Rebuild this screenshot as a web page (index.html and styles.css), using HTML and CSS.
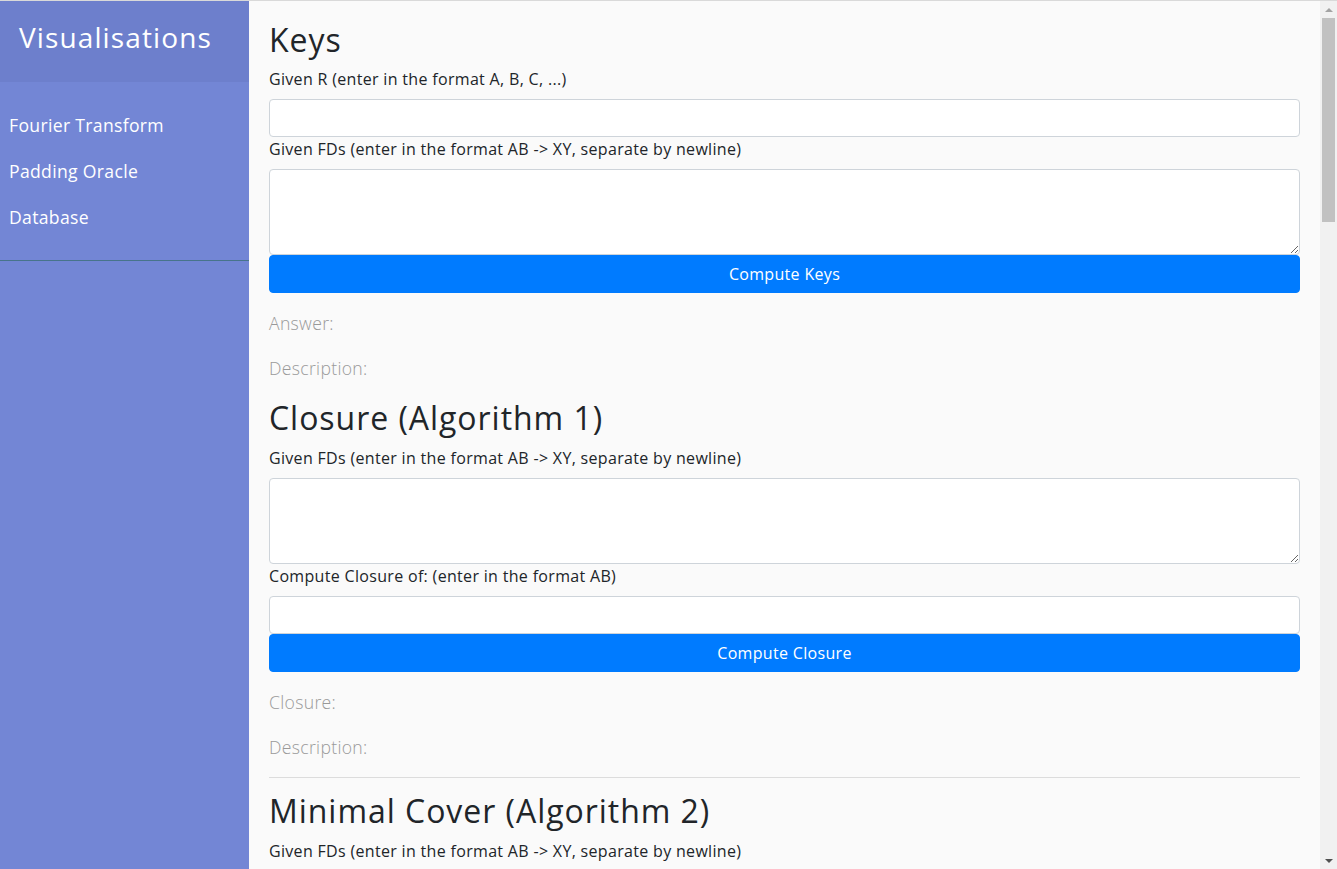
FILE: index.html
```html
<!DOCTYPE html>
<html lang="en">
<head>
<meta charset="utf-8">
<title>Visualisations - Database</title>
<link rel="stylesheet" href="styles.css">
</head>
<body>
<div class="wrapper">
  <nav class="sidebar">
    <div class="sidebar-header"><h3>Visualisations</h3></div>
    <ul class="components">
      <li><a href="#">Fourier Transform</a></li>
      <li><a href="#">Padding Oracle</a></li>
      <li><a href="#">Database</a></li>
    </ul>
  </nav>
  <main class="content">
    <section class="block">
      <h2 class="title">Keys</h2>
      <form class="form">
        <label class="label">Given R (enter in the format A, B, C, ...)</label>
        <input class="field" type="text">
        <label class="label">Given FDs (enter in the format AB -&gt; XY, separate by newline)</label>
        <textarea class="field area" rows="3"></textarea>
        <button class="btn" type="button">Compute Keys</button>
      </form>
      <p class="muted">Answer:</p>
      <p class="muted">Description:</p>
    </section>
    <section class="block">
      <h2 class="title">Closure (Algorithm 1)</h2>
      <form class="form">
        <label class="label">Given FDs (enter in the format AB -&gt; XY, separate by newline)</label>
        <textarea class="field area" rows="3"></textarea>
        <label class="label">Compute Closure of: (enter in the format AB)</label>
        <input class="field" type="text">
        <button class="btn" type="button">Compute Closure</button>
      </form>
      <p class="muted">Closure:</p>
      <p class="muted">Description:</p>
      <hr class="rule">
    </section>
    <section class="block">
      <h2 class="title">Minimal Cover (Algorithm 2)</h2>
      <form class="form">
        <label class="label">Given FDs (enter in the format AB -&gt; XY, separate by newline)</label>
        <textarea class="field area" rows="3"></textarea>
        <button class="btn" type="button">Compute Minimal Cover</button>
      </form>
      <p class="muted">Minimal Cover:</p>
      <p class="muted">Description:</p>
      <hr class="rule">
    </section>
    <section class="block">
      <h2 class="title">Minimal Cover (Algorithm 3)</h2>
      <form class="form">
        <label class="label">Given FDs (enter in the format AB -&gt; XY, separate by newline)</label>
        <textarea class="field area" rows="3"></textarea>
        <button class="btn" type="button">Compute Minimal Cover</button>
      </form>
      <p class="muted">Minimal Cover:</p>
      <p class="muted">Description:</p>
      <hr class="rule">
    </section>
    <section class="block">
      <h2 class="title">Check BCNF</h2>
      <form class="form">
        <label class="label">Given R (enter in the format A, B, C, ...)</label>
        <input class="field" type="text">
        <label class="label">Given FDs (enter in the format AB -&gt; XY, separate by newline)</label>
        <textarea class="field area" rows="3"></textarea>
        <button class="btn" type="button">Check BCNF</button>
      </form>
      <p class="muted">Answer:</p>
      <p class="muted">Description:</p>
      <hr class="rule">
    </section>
    <section class="block">
      <h2 class="title">BCNF Decomposition</h2>
      <form class="form">
        <label class="label">Given R (enter in the format A, B, C, ...)</label>
        <input class="field" type="text">
        <label class="label">Given FDs (enter in the format AB -&gt; XY, separate by newline)</label>
        <textarea class="field area" rows="3"></textarea>
        <button class="btn" type="button">Decompose</button>
      </form>
      <p class="muted">Answer:</p>
      <p class="muted">Description:</p>
      <hr class="rule">
    </section>
    <section class="block">
      <h2 class="title">3NF Synthesis</h2>
      <form class="form">
        <label class="label">Given R (enter in the format A, B, C, ...)</label>
        <input class="field" type="text">
        <label class="label">Given FDs (enter in the format AB -&gt; XY, separate by newline)</label>
        <textarea class="field area" rows="3"></textarea>
        <button class="btn" type="button">Synthesise</button>
      </form>
      <p class="muted">Answer:</p>
      <p class="muted">Description:</p>
    </section>
  </main>
  <div class="scrollbar" aria-hidden="true">
    <div class="sb-btn"><span class="arrow-up"></span></div>
    <div class="sb-track"><div class="sb-thumb"></div></div>
    <div class="sb-btn"><span class="arrow-down"></span></div>
  </div>
</div>
</body>
</html>
```
FILE: styles.css
```css
html, body {
  margin: 0;
  padding: 0;
  height: 100%;
  overflow: hidden;
}
body {
  font-family: "Open Sans", "Liberation Sans", sans-serif;
  font-size: 16px;
  line-height: 1.5;
  color: #212529;
  background: #fafafa;
  letter-spacing: 0.02em;
}
.wrapper {
  display: flex;
  align-items: stretch;
  box-sizing: border-box;
  height: 100vh;
  border-top: 1px solid #d9d9d9;
}
.sidebar {
  width: 249px;
  min-width: 249px;
  background: #7386d5;
  color: #fff;
}
.sidebar-header {
  padding: 20px 20px 20px 19px;
  background: #6d7fcc;
}
.sidebar-header h3 {
  margin: 0 0 7px;
  font-size: 28px;
  font-weight: 500;
  line-height: 1.2;
  letter-spacing: 0.04em;
}
.components {
  list-style: none;
  margin: 0;
  padding: 20px 0 19px;
  border-bottom: 1px solid #47748b;
}
.components a {
  display: block;
  padding: 10px 9px;
  font-size: 17.6px;
  line-height: 1.5;
  color: #fff;
  text-decoration: none;
}
.content {
  flex: 1;
  min-width: 0;
  padding: 20px;
  overflow-y: auto;
  scrollbar-width: none;
}
.title {
  margin: 0 0 8px;
  font-size: 32px;
  font-weight: 500;
  line-height: 1.2;
  letter-spacing: 0.03em;
}
.form {
  display: flex;
  flex-direction: column;
  margin-bottom: 16px;
}
.label {
  display: block;
  margin-bottom: 8px;
  font-size: 16px;
  line-height: 24px;
}
.field {
  display: block;
  box-sizing: border-box;
  width: 100%;
  height: 38px;
  padding: 6px 12px;
  font: inherit;
  color: #495057;
  background: #fff;
  border: 1px solid #ced4da;
  border-radius: 4px;
}
.area {
  height: 86px;
  resize: vertical;
}
.btn {
  display: block;
  width: 100%;
  height: 38px;
  padding: 6px 12px;
  font: inherit;
  letter-spacing: 0.02em;
  color: #fff;
  background: #007bff;
  border: 1px solid #007bff;
  border-radius: 4px;
  cursor: pointer;
}
.muted {
  margin: 0 0 15px;
  font-size: 17.6px;
  font-weight: 300;
  line-height: 1.7;
  color: #999;
}
.rule {
  margin: 15px 0 14px;
  border: 0;
  border-top: 1px solid #dcdcdc;
}
.scrollbar {
  width: 17px;
  min-width: 17px;
  display: flex;
  flex-direction: column;
  background: #f1f1f1;
}
.sb-btn {
  height: 17px;
  display: flex;
  align-items: center;
  justify-content: center;
}
.arrow-up {
  width: 0;
  height: 0;
  border-left: 4px solid transparent;
  border-right: 4px solid transparent;
  border-bottom: 4px solid #a3a3a3;
}
.arrow-down {
  width: 0;
  height: 0;
  border-left: 4px solid transparent;
  border-right: 4px solid transparent;
  border-top: 4px solid #505050;
}
.sb-track {
  flex: 1;
  padding: 0 2px;
}
.sb-thumb {
  height: 204px;
  background: #c1c1c1;
}
```
